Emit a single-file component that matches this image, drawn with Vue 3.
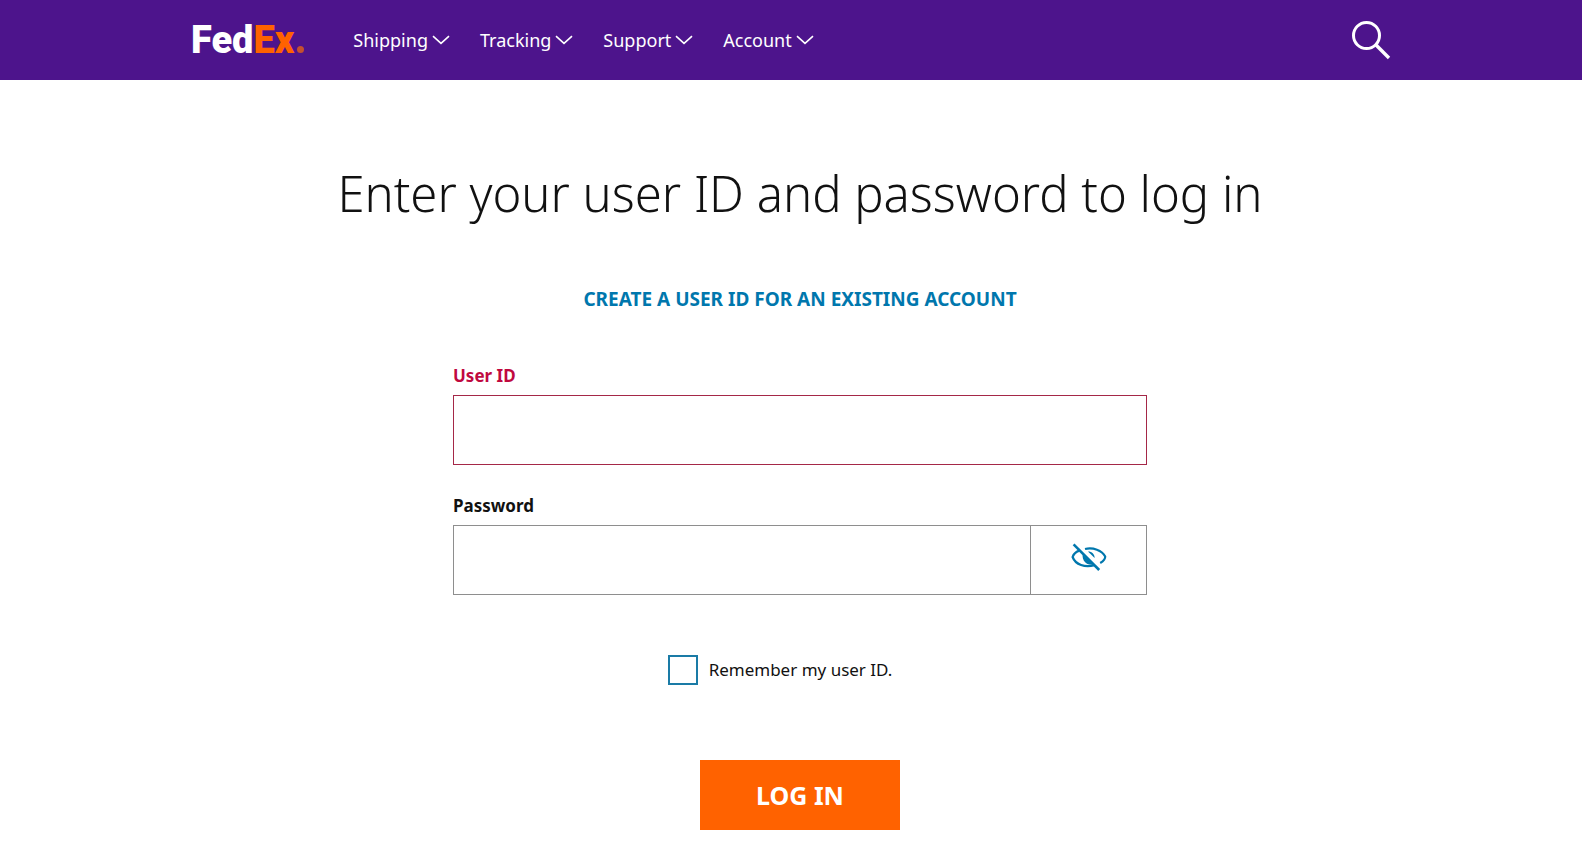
<script setup>
import { ref } from 'vue'

const menus = ['Shipping', 'Tracking', 'Support', 'Account']
const userId = ref('')
const password = ref('')
const remember = ref(false)
const showPassword = ref(false)
</script>

<template>
  <div class="page">
    <header class="header">
      <div class="bar">
        <a class="logo" href="#" aria-label="FedEx home"><span>Fed</span><span class="ex">Ex</span><span class="mark"></span></a>
        <nav class="nav">
          <button v-for="menu in menus" :key="menu" type="button" class="menu">
            {{ menu }}
            <svg width="18" height="10" viewBox="0 0 18 10" aria-hidden="true">
              <path d="M1 1.2 L9 8.4 L17 1.2" fill="none" stroke="currentColor" stroke-width="1.6" />
            </svg>
          </button>
        </nav>
        <button type="button" class="search" aria-label="Search">
          <svg width="40" height="40" viewBox="0 0 40 40" aria-hidden="true">
            <circle cx="15.5" cy="15.5" r="13" fill="none" stroke="currentColor" stroke-width="3" />
            <path d="M24.8 24.8 L38 38" fill="none" stroke="currentColor" stroke-width="3.4" />
          </svg>
        </button>
      </div>
    </header>

    <main class="main">
      <h1 class="title">Enter your user ID and password to log in</h1>
      <a class="create" href="#">CREATE A USER ID FOR AN EXISTING ACCOUNT</a>

      <form class="form" @submit.prevent>
        <div class="field invalid">
          <label for="user-id">User ID</label>
          <div class="box">
            <input id="user-id" v-model="userId" type="text" autocomplete="username" />
          </div>
        </div>

        <div class="field">
          <label for="password">Password</label>
          <div class="box">
            <input
              id="password"
              v-model="password"
              :type="showPassword ? 'text' : 'password'"
              autocomplete="current-password"
            />
            <button
              type="button"
              class="reveal"
              aria-label="Show password"
              :aria-pressed="showPassword"
              @click="showPassword = !showPassword"
            >
              <svg width="36" height="28" viewBox="0 0 36 28" aria-hidden="true">
                <g fill="none" stroke="currentColor" stroke-width="2.2">
                  <path d="M14 6 C22 4 31 7.4 34.2 13.4 C34.4 16 32 18.4 29.2 20" />
                  <path d="M8.2 7.6 C4.6 9 2.4 11.4 1.6 14 C4.4 21.6 14 25 23.4 22.2" />
                  <path d="M2.6 1.4 L28.2 27" stroke-width="2.6" />
                </g>
                <path d="M11.6 11.4 L22 21.4 C16 22.8 11 17.8 11.6 11.4 Z" fill="currentColor" />
                <path d="M17 8.6 C20.6 8.4 23.6 11.2 23.6 15 Z" fill="currentColor" />
              </svg>
            </button>
          </div>
        </div>

        <div class="remember">
          <input id="remember" v-model="remember" type="checkbox" />
          <label for="remember">Remember my user ID.</label>
        </div>

        <button type="submit" class="submit">LOG IN</button>
      </form>
    </main>
  </div>
</template>

<style>
body {
  margin: 0;
  background: #fff;
}
</style>

<style scoped>
.page {
  font-family: "Noto Sans", "Open Sans", sans-serif;
  font-size: 18px;
  line-height: 24px;
  color: #111;
}

button {
  font: inherit;
  padding: 0;
  border: 0;
  background: none;
  cursor: pointer;
}

.header {
  background: #4d148c;
  color: #fff;
}

.bar {
  display: flex;
  align-items: center;
  box-sizing: border-box;
  max-width: 1200px;
  height: 80px;
  margin: 0 auto;
}

.logo {
  display: flex;
  align-items: baseline;
  margin-right: 49px;
  font-family: Roboto, "Liberation Sans", sans-serif;
  font-size: 38px;
  font-weight: 900;
  line-height: 40px;
  color: #fff;
  text-decoration: none;
}

.ex {
  color: #ff6200;
}

.mark {
  width: 7px;
  height: 7px;
  margin-left: 3px;
  border-radius: 50%;
  background: #c4502f;
}

.nav {
  display: flex;
  gap: 30px;
}

.menu {
  display: flex;
  align-items: center;
  gap: 4px;
  color: #fff;
}

.search {
  display: flex;
  margin-left: auto;
  color: #fff;
}

.main {
  display: flex;
  flex-direction: column;
  align-items: center;
  padding: 79px 0 12px 18px;
}

.title {
  margin: 0;
  font-size: 49px;
  font-weight: 300;
  line-height: 68px;
  text-align: center;
}

.create {
  margin-top: 60px;
  font-size: 19px;
  font-weight: 700;
  color: #0077ad;
  text-decoration: none;
}

.form {
  display: flex;
  flex-direction: column;
  align-items: center;
  box-sizing: border-box;
  width: 100%;
  max-width: 694px;
  margin-top: 53px;
}

.field {
  width: 100%;
  margin-bottom: 29px;
}

.field label {
  display: block;
  margin-bottom: 7px;
  font-size: 17px;
  font-weight: 700;
}

.box {
  display: flex;
  box-sizing: border-box;
  height: 70px;
  border: 1px solid #8e8e8e;
}

.box input {
  flex: 1;
  min-width: 0;
  padding: 0 16px;
  border: 0;
  outline: 0;
  background: none;
  font: inherit;
}

.invalid label {
  color: #c0093f;
}

.invalid .box {
  border-color: #a52848;
}

.reveal {
  display: flex;
  align-items: center;
  justify-content: center;
  width: 116px;
  padding-bottom: 6px;
  border-left: 1px solid #8e8e8e;
  color: #0077ad;
}

.remember {
  display: flex;
  align-items: center;
  gap: 11px;
  margin-top: 31px;
  padding-right: 40px;
  font-size: 17px;
}

.remember input {
  appearance: none;
  box-sizing: border-box;
  width: 30px;
  height: 30px;
  margin: 0;
  border: 2px solid #1a7ba6;
  background: #fff;
}

.remember input:checked {
  background: #0077ad;
}

.submit {
  width: 200px;
  height: 70px;
  margin-top: 75px;
  background: #ff6200;
  color: #fff;
  font-size: 25px;
  font-weight: 700;
}
</style>
